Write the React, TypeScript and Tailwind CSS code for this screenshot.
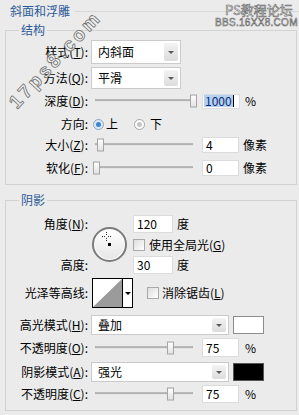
import React from "react";

function Label({ children }: { children: React.ReactNode }) {
  return <span className="w-[82px] shrink-0 text-right whitespace-nowrap">{children}</span>;
}

function Select({ value, wide }: { value: string; wide?: boolean }) {
  return (
    <div className={`ml-[3px] flex h-full border border-[#cbcbcb] bg-white ${wide ? "w-[138px]" : "w-[90px]"}`}>
      <span className="flex flex-1 items-center pl-[6px]">{value}</span>
      <span className="my-[2px] mr-[2px] flex w-[14px] items-center justify-center rounded-[2px] bg-gradient-to-b from-[#f3f3f3] to-[#dcdcdc]">
        <span className="border-x-[3px] border-t-[3px] border-x-transparent border-t-[#5a5a5a]" />
      </span>
    </div>
  );
}

function Slider({ pos }: { pos: number }) {
  return (
    <div className="relative ml-[3px] h-full w-[106px] shrink-0">
      <div className="absolute left-[4px] right-[4px] top-1/2 h-[3px] -translate-y-1/2 border-t border-b border-t-[#9c9c9c] border-b-white bg-[#c8c8c8]" />
      <div
        style={{ left: pos }}
        className="absolute top-1/2 h-[13px] w-[7px] -translate-y-1/2 border border-[#a4a4a4] bg-gradient-to-b from-white to-[#e2e2e2]"
      />
    </div>
  );
}

function Field({ value, h }: { value: string; h: string }) {
  return (
    <div className={`flex w-[37px] items-center border border-[#dcdcdc] bg-white pl-[3px] ${h}`}>{value}</div>
  );
}

function Check() {
  return <span className="block h-[12px] w-[12px] shrink-0 border border-[#a9a9a9] bg-gradient-to-br from-[#dedede] to-white" />;
}

export default function App() {
  return (
    <div className="relative h-[415px] w-[299px] overflow-hidden bg-[#ebebeb] font-['Noto_Sans_CJK_SC','Noto_Sans',sans-serif] text-[12px] leading-none text-black">
      <div className="flex h-[20px] items-center pl-[10px] pt-[2px]">
        <span className="text-[#2b5a98]">斜面和浮雕</span>
        <span className="ml-[4px] flex-1 border-t border-[#d8d8d8]" />
      </div>

      <fieldset className="ml-[5px] mr-[2px] mt-[2px] border border-[#d2d2d2] pb-[7px]">
        <legend className="ml-[13px] h-[16px] px-[2px] leading-[16px] text-[#2b5a98]">结构</legend>

        <div className="mt-[2px] flex h-[24px] items-center">
          <Label>样式(<u>T</u>):</Label>
          <Select value="内斜面" />
        </div>
        <div className="mt-[3px] flex h-[22px] items-center">
          <Label>方法(<u>Q</u>):</Label>
          <Select value="平滑" />
        </div>
        <div className="mt-[2px] flex h-[20px] items-center">
          <Label>深度(<u>D</u>):</Label>
          <Slider pos={99} />
          <div className="ml-[5px] flex h-[15px] w-[38px] items-center border border-[#dcdcdc] bg-white pl-[1px]">
            <span className="bg-[#b4cff0] px-[1px] text-[#0c2a73]">1000</span>
            <span className="h-[12px] w-px bg-black" />
          </div>
          <span className="ml-[5px]">%</span>
        </div>
        <div className="mt-[2px] flex h-[22px] items-center">
          <Label>方向:</Label>
          <span className="ml-[5px] flex h-[11px] w-[11px] items-center justify-center rounded-full border border-[#8fa6c4] bg-[#dbe8f7]">
            <span className="h-[5px] w-[5px] rounded-full bg-[#3d86d6]" />
          </span>
          <span className="ml-[2px]">上</span>
          <span className="ml-[16px] flex h-[11px] w-[11px] items-center justify-center rounded-full border border-[#a5a5a5] bg-white">
            <span className="h-[5px] w-[5px] rounded-full bg-[#c4c4c4]" />
          </span>
          <span className="ml-[5px]">下</span>
        </div>
        <div className="mt-[1px] flex h-[18px] items-center">
          <Label>大小(<u>Z</u>):</Label>
          <Slider pos={6} />
          <div className="ml-[5px]">
            <Field value="4" h="h-[16px]" />
          </div>
          <span className="ml-[4px]">像素</span>
        </div>
        <div className="mt-[5px] flex h-[18px] items-center">
          <Label>软化(<u>F</u>):</Label>
          <Slider pos={2} />
          <div className="ml-[5px]">
            <Field value="0" h="h-[16px]" />
          </div>
          <span className="ml-[4px]">像素</span>
        </div>
      </fieldset>

      <fieldset className="ml-[5px] mr-[2px] mt-[7px] border border-[#d2d2d2] pb-[7px]">
        <legend className="ml-[13px] h-[16px] px-[2px] leading-[16px] text-[#2b5a98]">阴影</legend>

        <div className="mt-[6px] flex h-[61px]">
          <div className="flex w-[82px] shrink-0 flex-col justify-between">
            <div className="flex h-[20px] items-center justify-end">
              角度(<u>N</u>):
            </div>
            <div className="flex h-[20px] items-center justify-end">高度:</div>
          </div>
          <div className="w-[45px] shrink-0">
            <div className="relative ml-[4px] mt-[13px] h-[35px] w-[35px] rounded-full border-2 border-[#7b7b7b] bg-gradient-to-b from-white to-[#e6e6e6] shadow-[inset_0_0_0_1px_#ffffff]">
              <svg className="absolute left-[8px] top-[3px]" width="9" height="9" viewBox="0 0 9 9">
                <path d="M4.5 0v3M4.5 6v3M0 4.5h3M6 4.5h3" stroke="#333" strokeWidth="1" strokeDasharray="1 1" />
              </svg>
              <span className="absolute left-[14px] top-[14px] h-[3px] w-[3px] bg-black" />
            </div>
          </div>
          <div className="flex flex-col">
            <div className="flex h-[20px] items-center">
              <div className="flex h-[18px] w-[40px] items-center border border-[#dcdcdc] bg-white pl-[3px]">120</div>
              <span className="ml-[4px]">度</span>
            </div>
            <div className="flex h-[21px] items-center">
              <Check />
              <span className="ml-[4px]">使用全局光(<u>G</u>)</span>
            </div>
            <div className="flex h-[20px] items-center">
              <div className="flex h-[18px] w-[40px] items-center border border-[#dcdcdc] bg-white pl-[3px]">30</div>
              <span className="ml-[4px]">度</span>
            </div>
          </div>
        </div>

        <div className="mt-[3px] flex h-[30px] items-center">
          <Label>光泽等高线:</Label>
          <div className="ml-[4px] flex h-[30px] w-[41px] border border-black bg-white">
            <svg width="29" height="28" viewBox="0 0 29 28">
              <polygon points="0,28 29,0 29,28" fill="#9b9b9b" />
            </svg>
            <span className="flex flex-1 items-center justify-center border-l border-black">
              <span className="border-x-[3px] border-t-[3px] border-x-transparent border-t-black" />
            </span>
          </div>
          <span className="ml-[14px]">
            <Check />
          </span>
          <span className="ml-[3px]">消除锯齿(<u>L</u>)</span>
        </div>

        <div className="mt-[7px] flex h-[20px] items-center">
          <Label>高光模式(<u>H</u>):</Label>
          <Select value="叠加" wide />
          <span className="ml-[4px] h-[18px] w-[31px] border border-[#8c8c8c] bg-white" />
        </div>
        <div className="mt-[3px] flex h-[19px] items-center">
          <Label>不透明度(<u>O</u>):</Label>
          <Slider pos={76} />
          <div className="ml-[5px]">
            <Field value="75" h="h-[19px]" />
          </div>
          <span className="ml-[6px]">%</span>
        </div>
        <div className="mt-[5px] flex h-[20px] items-center">
          <Label>阴影模式(<u>A</u>):</Label>
          <Select value="强光" wide />
          <span className="ml-[4px] h-[18px] w-[31px] border border-[#555] bg-black" />
        </div>
        <div className="mt-[3px] flex h-[18px] items-center">
          <Label>不透明度(<u>C</u>):</Label>
          <Slider pos={76} />
          <div className="ml-[5px]">
            <Field value="75" h="h-[18px]" />
          </div>
          <span className="ml-[6px]">%</span>
        </div>
      </fieldset>

      <div className="pointer-events-none absolute left-[-15px] top-[50px] w-[140px] rotate-[-47deg] text-center font-['Liberation_Sans',sans-serif] text-[19px] font-bold tracking-[3px] text-[#f2f2f2] [-webkit-text-stroke:0.8px_#6f6f6f]">
        17ps8.com
      </div>
      <div className="pointer-events-none absolute left-[225px] top-[3px] text-[13px] text-white [-webkit-text-stroke:0.6px_#6a6a6a]">
        PS教程论坛
      </div>
      <div className="pointer-events-none absolute left-[215px] top-[18px] font-['Liberation_Sans',sans-serif] text-[10px] tracking-[0.3px] text-white [-webkit-text-stroke:0.6px_#6a6a6a]">
        BBS.16XX8.COM
      </div>
    </div>
  );
}
